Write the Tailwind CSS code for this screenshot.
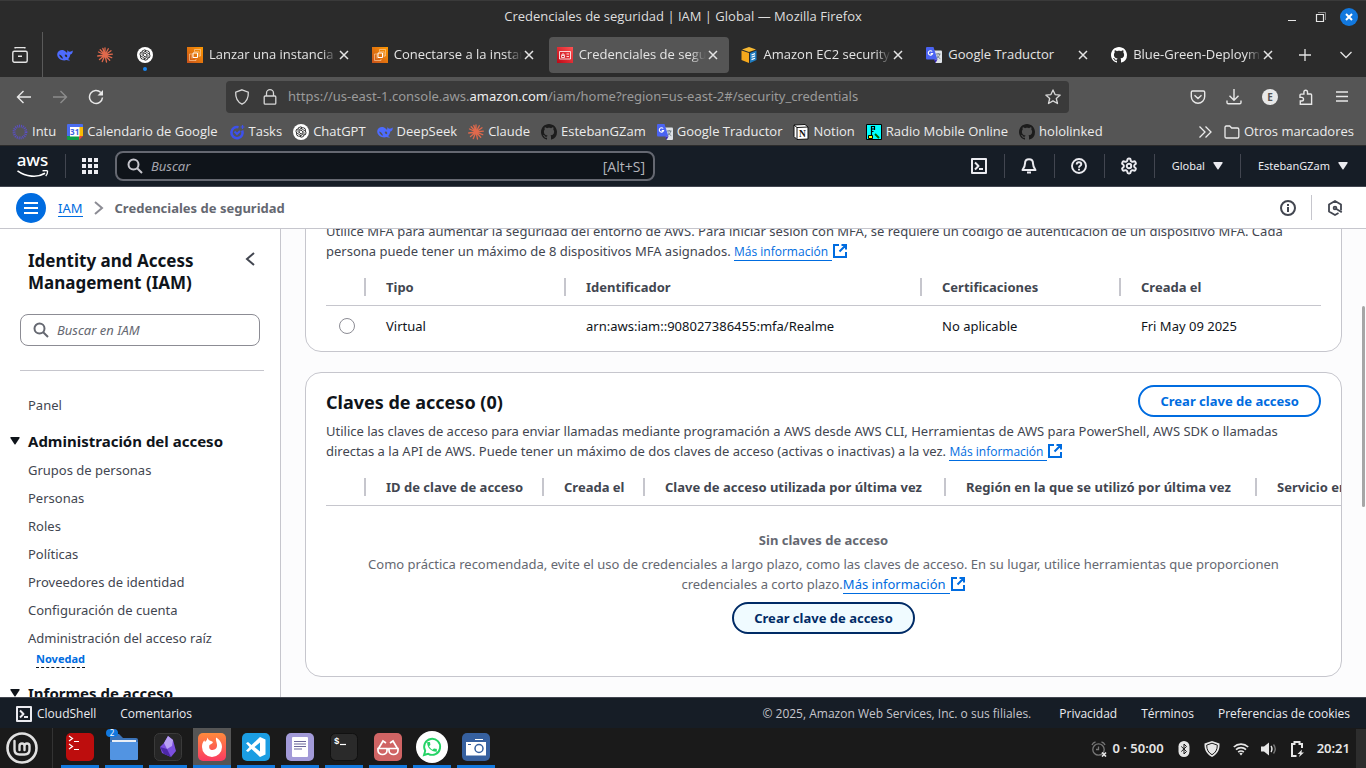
<!DOCTYPE html>
<html lang="es">
<head>
<meta charset="utf-8">
<meta name="viewport" content="width=device-width, initial-scale=1">
<title>Credenciales de seguridad | IAM | Global</title>
<script src="https://cdn.jsdelivr.net/npm/@tailwindcss/browser@4"></script>
</head>
<body class="flex h-screen flex-col overflow-hidden bg-[#2b2b2b] font-['Noto_Sans','Open_Sans',sans-serif] text-[13px]">

<!-- Shared icons -->
<svg class="absolute size-0" aria-hidden="true">
  <symbol id="x" viewBox="0 0 10 10"><path d="M1 1l8 8M9 1l-8 8" stroke="currentColor" stroke-width="1.500"/></symbol>
  <symbol id="github" viewBox="0 0 16 16"><path fill="currentColor" d="M8 0C3.58 0 0 3.58 0 8c0 3.54 2.29 6.53 5.47 7.59.4.07.55-.17.55-.38 0-.19-.01-.82-.01-1.49-2.01.37-2.53-.49-2.69-.94-.09-.23-.48-.94-.82-1.13-.28-.15-.68-.52-.01-.53.63-.01 1.08.58 1.23.82.72 1.21 1.87.87 2.33.66.07-.52.28-.87.51-1.07-1.78-.2-3.64-.89-3.64-3.95 0-.87.31-1.59.82-2.15-.08-.2-.36-1.02.08-2.12 0 0 .67-.21 2.2.82.64-.18 1.32-.27 2-.27s1.36.09 2 .27c1.53-1.04 2.2-.82 2.2-.82.44 1.1.16 1.92.08 2.12.51.56.82 1.27.82 2.15 0 3.07-1.87 3.75-3.65 3.95.29.25.54.73.54 1.48 0 1.07-.01 1.93-.01 2.2 0 .21.15.46.55.38A8.01 8.01 0 0016 8c0-4.42-3.58-8-8-8z"/></symbol>
  <symbol id="gpt" viewBox="0 0 32 32"><circle cx="16" cy="16" r="16" fill="#fff"/><path transform="translate(5.2 5.2) scale(.9)" fill="#000" d="M22.2819 9.8211a5.9847 5.9847 0 0 0-.5157-4.9108 6.0462 6.0462 0 0 0-6.5098-2.9A6.0651 6.0651 0 0 0 4.9807 4.1818a5.9847 5.9847 0 0 0-3.9977 2.9 6.0462 6.0462 0 0 0 .7427 7.0966 5.98 5.98 0 0 0 .511 4.9107 6.051 6.051 0 0 0 6.5146 2.9001A5.9847 5.9847 0 0 0 13.2599 24a6.0557 6.0557 0 0 0 5.7718-4.2058 5.9894 5.9894 0 0 0 3.9977-2.9001 6.0557 6.0557 0 0 0-.7475-7.0729zm-9.022 12.6081a4.4755 4.4755 0 0 1-2.8764-1.0408l.1419-.0804 4.7783-2.7582a.7948.7948 0 0 0 .3927-.6813v-6.7369l2.02 1.1686a.071.071 0 0 1 .038.052v5.5826a4.504 4.504 0 0 1-4.4945 4.4944zm-9.6607-4.1254a4.4708 4.4708 0 0 1-.5346-3.0137l.142.0852 4.783 2.7582a.7712.7712 0 0 0 .7806 0l5.8428-3.3685v2.3324a.0804.0804 0 0 1-.0332.0615L9.74 19.9502a4.4992 4.4992 0 0 1-6.1408-1.6464zM2.3408 7.8956a4.485 4.485 0 0 1 2.3655-1.9728V11.6a.7664.7664 0 0 0 .3879.6765l5.8144 3.3543-2.0201 1.1685a.0757.0757 0 0 1-.071 0l-4.8303-2.7865A4.504 4.504 0 0 1 2.3408 7.872zm16.5963 3.8558L13.1038 8.364 15.1192 7.2a.0757.0757 0 0 1 .071 0l4.8303 2.7913a4.4944 4.4944 0 0 1-.6765 8.1042v-5.6772a.79.79 0 0 0-.407-.667zm2.0107-3.0231l-.142-.0852-4.7735-2.7818a.7759.7759 0 0 0-.7854 0L9.409 9.2297V6.8974a.0662.0662 0 0 1 .0284-.0615l4.8303-2.7866a4.4992 4.4992 0 0 1 6.6802 4.66zM8.3065 12.863l-2.02-1.1638a.0804.0804 0 0 1-.038-.0567V6.0742a4.4992 4.4992 0 0 1 7.3757-3.4537l-.142.0805L8.704 5.459a.7948.7948 0 0 0-.3927.6813zm1.0976-2.3654l2.602-1.4998 2.6069 1.4998v2.9994l-2.5974 1.4997-2.6067-1.4997Z"/></symbol>
  <symbol id="whale" viewBox="0 0 16 16"><path fill="#4d6bfe" d="M.2 7C.7 3.6 4 2.400 6.600 3.200 8 3.700 8.800 4.600 9.600 5.600 10.600 5.900 10.200 4.600 10.300 3.300c.6.2 1 .7 1.300 1.300 1.200.4 2.500-.1 4.100-1.100.2 1.800-.4 3.500-2.400 4.100-.3 2-1.200 3.600-2.200 4.600.7.500 1.600.8 2 1-1.200.6-2.700.4-3.700-.1C5.500 14.300 0 12 .2 7zm7.500 1.100c.2 1 .9 2.100 2 2.200.9-.5.6-2-.2-2.600-.6-.4-1.500-.3-1.800.4zM2.100 7.500c.4 2 2 3.900 4 4.300-.6-2-1.800-4-4-4.300z"/></symbol>
  <symbol id="spark" viewBox="0 0 16 16"><path stroke="#e0694c" stroke-width="1.300" stroke-linecap="round" d="M8 8V.8M8 8l3.300-6.200M8 8l6-4.200M8 8l7.300-.8M8 8l6.700 2.700M8 8l4.700 5.300M8 8l1.500 7M8 8l-2.700 6.600M8 8l-5.500 4.500M8 8l-7.300 1M8 8L1.500 5M8 8L3.200 2.700M8 8L5.800 1.300"/></symbol>
  <symbol id="ec2" viewBox="0 0 16 16"><defs><linearGradient id="og" x1="0" y1="1" x2="1" y2="0"><stop stop-color="#c8511b"/><stop offset="1" stop-color="#f90"/></linearGradient></defs><path fill="url(#og)" d="M0 0h16v16H0z"/><path fill="none" stroke="#fff" stroke-width="1" d="M6 6h4.500v4.500H6z"/><path fill="none" stroke="#ffd9ae" stroke-width=".6" d="M7.500 4.500V2.500h6V9h-1.500M4.500 7H2.500v6.500H9V12M5 11.500V6.500M7 4.800h5v5"/></symbol>
  <symbol id="iamfav" viewBox="0 0 16 16"><defs><linearGradient id="rg" x1="0" y1="1" x2="1" y2="0"><stop stop-color="#bd0816"/><stop offset="1" stop-color="#ff5252"/></linearGradient></defs><path fill="url(#rg)" d="M0 0h16v16H0z"/><path fill="none" stroke="#fff" stroke-width=".8" d="M2.500 4.500h11v7.500h-11zM4.500 8.500h3v2h-3zM5 8.500V7h2v1.500M9.500 7h2.500M9.500 9.500h2.500"/></symbol>
  <symbol id="gtr" viewBox="0 0 16 16"><path fill="#dfe3e8" d="M6 3.500h9q1 0 1 1V15q0 1-1 1H9.500z"/><path fill="#4a63f2" d="M1 0h6.500l4 12.500H1q-1 0-1-1V1q0-1 1-1z"/><path fill="#3b2bb5" d="M8 12.500h3.500L9.500 16z"/><path fill="none" stroke="#fff" stroke-width="1.100" d="M6.200 4.500A2.200 2.200 0 1 0 6.600 6.600H4.700"/><path fill="none" stroke="#6d7c86" d="M10 7h4.500M12.200 6v1M13.700 7c-.4 2.200-1.400 3.300-3 4.300M11.300 8.500c.5 1.500 1.500 2.300 3 3.200"/></symbol>
  <symbol id="search" viewBox="0 0 16 16"><path fill="none" stroke="currentColor" stroke-width="2" d="M6.500 1.500a5 5 0 1 0 0 10 5 5 0 0 0 0-10zM10.200 10.200l4.800 4.800"/></symbol>
  <symbol id="shell" viewBox="0 0 16 16"><path fill="none" stroke="currentColor" stroke-width="2" stroke-linejoin="round" d="M1 1h14v14H1zM4 4.500L7.500 8 4 11.500M8 11h4"/></symbol>
  <symbol id="ext" viewBox="0 0 16 16"><path fill="none" stroke="currentColor" stroke-width="2" d="M7 2H2v12h12V9M9.500 2H14v4.500M14 2L7.500 8.500"/></symbol>
</svg>

<!-- Window title -->
<header class="relative flex h-8 shrink-0 items-center justify-center border-t border-[#3a3a3a] text-[#dedede]">
  <h1 class="font-['Open_Sans',sans-serif] text-[13px]">Credenciales de seguridad | IAM | Global — Mozilla Firefox</h1>
  <div class="absolute right-2 flex items-center gap-3.5 text-[#e6e6e6]">
    <button aria-label="Minimizar" class="flex h-3 w-3 items-end pb-px"><svg class="h-2 w-2" viewBox="0 0 8 8"><path d="M0 6.500h8" stroke="currentColor"/></svg></button>
    <button aria-label="Restaurar"><svg class="size-3" viewBox="0 0 12 12" fill="none" stroke="currentColor"><path d="M2.500 3.500h7v7h-7z" stroke-width="1.200"/><path d="M4 1.500h7.500V9" opacity=".5"/></svg></button>
    <button aria-label="Cerrar" class="grid size-[18px] place-items-center rounded-full bg-[#1278de] text-white"><svg class="size-2" viewBox="0 0 8 8"><path d="M1 1l6 6M7 1L1 7" stroke="currentColor" stroke-width="2"/></svg></button>
  </div>
</header>

<!-- Tab strip -->
<nav aria-label="Pestañas" class="flex h-[45px] shrink-0 items-center font-['Open_Sans',sans-serif] text-[#e4e4e4]">
  <button aria-label="Firefox View" class="grid h-full w-[43px] place-items-center border-r border-[#5a5a5a] pr-0.5"><svg class="size-4" viewBox="0 0 16 16" fill="none" stroke="currentColor" stroke-width="1.400"><rect x=".8" y="4.200" width="14.400" height="11" rx="1.500"/><path d="M2.500 1.200c.5-.5 1-.6 1.500-.6h8c.5 0 1 .1 1.500.6M6 9.200h4"/></svg></button>
  <div class="flex w-[135px] shrink-0 pl-0.5">
    <button aria-label="DeepSeek" class="grid h-9 w-10 place-items-center"><svg class="size-4"><use href="#whale"/></svg></button>
    <button aria-label="Claude" class="grid h-9 w-10 place-items-center"><svg class="size-4"><use href="#spark"/></svg></button>
    <button aria-label="ChatGPT" class="relative grid h-9 w-10 place-items-center"><svg class="size-4"><use href="#gpt"/></svg><span class="absolute bottom-0.5 size-1 rounded-full bg-[#1b86f0]"></span></button>
  </div>
  <div class="grid min-w-0 flex-1 grid-cols-6 gap-1 pl-px">
    <a href="#" class="flex h-9 min-w-0 items-center gap-1.5 rounded px-2"><svg class="size-4 shrink-0"><use href="#ec2"/></svg><span class="-mr-1 flex-1 overflow-hidden whitespace-nowrap [mask-image:linear-gradient(to_right,black_88%,transparent)]">Lanzar una instancia | EC2</span><svg class="mr-[3px] size-2.5 shrink-0"><use href="#x"/></svg></a>
    <a href="#" class="flex h-9 min-w-0 items-center gap-1.5 rounded px-2"><svg class="size-4 shrink-0"><use href="#ec2"/></svg><span class="-mr-1 flex-1 overflow-hidden whitespace-nowrap [mask-image:linear-gradient(to_right,black_88%,transparent)]">Conectarse a la instancia</span><svg class="mr-[3px] size-2.5 shrink-0"><use href="#x"/></svg></a>
    <a href="#" aria-current="page" class="flex h-9 min-w-0 items-center gap-1.5 rounded bg-[#555] px-2"><svg class="size-4 shrink-0"><use href="#iamfav"/></svg><span class="-mr-1 flex-1 overflow-hidden whitespace-nowrap [mask-image:linear-gradient(to_right,black_88%,transparent)]">Credenciales de seguridad</span><svg class="mr-[3px] size-2.5 shrink-0"><use href="#x"/></svg></a>
    <a href="#" class="flex h-9 min-w-0 items-center gap-1.5 rounded px-2"><svg class="size-4 shrink-0" viewBox="0 0 16 16"><path fill="#f6b832" d="M8 0l7 2.500L8 5 1 2.500z"/><path fill="#f6a81c" d="M.5 3.500L8 6v10L.5 13z"/><path fill="#1f7cc0" d="M9 6l6.500-2.500V13L9 16z"/><path d="M10.500 8l3.500-1.400M10.500 10.300L14 8.900M10.500 12.600l3.500-1.400" stroke="#fff" stroke-width="1.200"/></svg><span class="-mr-1 flex-1 overflow-hidden whitespace-nowrap [mask-image:linear-gradient(to_right,black_88%,transparent)]">Amazon EC2 security groups</span><svg class="mr-[3px] size-2.5 shrink-0"><use href="#x"/></svg></a>
    <a href="#" class="flex h-9 min-w-0 items-center gap-1.5 rounded px-2"><svg class="size-4 shrink-0"><use href="#gtr"/></svg><span class="-mr-1 flex-1 overflow-hidden whitespace-nowrap">Google Traductor</span><svg class="mr-[3px] size-2.5 shrink-0"><use href="#x"/></svg></a>
    <a href="#" class="flex h-9 min-w-0 items-center gap-1.5 rounded px-2"><svg class="size-4 shrink-0 text-white"><use href="#github"/></svg><span class="-mr-1 flex-1 overflow-hidden whitespace-nowrap [mask-image:linear-gradient(to_right,black_88%,transparent)]">Blue-Green-Deployment</span><svg class="mr-[3px] size-2.5 shrink-0"><use href="#x"/></svg></a>
  </div>
  <div class="flex w-[82px] shrink-0">
    <button aria-label="Nueva pestaña" class="grid w-[42px] place-items-center"><svg class="size-3" viewBox="0 0 12 12"><path d="M6 0v12M0 6h12" stroke="currentColor" stroke-width="1.300"/></svg></button>
    <button aria-label="Listar pestañas" class="grid w-10 place-items-center"><svg class="h-2 w-3" viewBox="0 0 12 8" fill="none"><path d="M.5 1L6 6.500 11.500 1" stroke="currentColor" stroke-width="1.300"/></svg></button>
  </div>
</nav>

<!-- Navigation toolbar -->
<div class="flex h-10 shrink-0 items-center bg-[#555] text-[#e8e8e8]">
  <div class="flex w-[226px] shrink-0 gap-5 pl-4">
    <button aria-label="Atrás"><svg class="size-4" viewBox="0 0 16 16" fill="none" stroke="currentColor" stroke-width="1.400"><path d="M15 8H1.500M7.500 2L1.500 8l6 6"/></svg></button>
    <button aria-label="Adelante" class="text-[#8c8c8c]"><svg class="size-4" viewBox="0 0 16 16" fill="none" stroke="currentColor" stroke-width="1.400"><path d="M1 8h13.500M8.500 2l6 6-6 6"/></svg></button>
    <button aria-label="Recargar"><svg class="size-4" viewBox="0 0 16 16" fill="none" stroke="currentColor" stroke-width="1.500"><path d="M14.500 8.500A6.500 6.500 0 1 1 12.800 3.600"/><path d="M15 1v5.500H9.500z" fill="currentColor" stroke="none"/></svg></button>
  </div>
  <div class="flex h-8 flex-1 items-center rounded bg-[#3a3a3a] px-2 text-[#d8d8d8]">
    <svg class="size-4" viewBox="0 0 16 16" fill="none" stroke="currentColor" stroke-width="1.300"><path d="M8 .8l6.300 2.300c.3 5.500-1.300 9.600-6.300 12.100C3 12.700 1.400 8.600 1.700 3.100z"/></svg>
    <svg class="ml-3 size-4" viewBox="0 0 16 16" fill="none" stroke="currentColor" stroke-width="1.300"><rect x="2.200" y="7" width="11.600" height="8.200" rx="1"/><path d="M4.500 7V4.200a3.500 3.500 0 0 1 7 0V7"/></svg>
    <span class="ml-2.5 flex-1 whitespace-nowrap text-[13px] text-[#9b9b9b]">https://us-east-1.console.aws.<span class="text-[#efefef]">amazon.com</span>/iam/home?region=us-east-2#/security_credentials</span>
    <svg class="size-4" viewBox="0 0 16 16" fill="none" stroke="currentColor" stroke-width="1.300" stroke-linejoin="round"><path d="M8 .9l2.100 4.700 5.100.5-3.900 3.400 1.200 5L8 11.900l-4.500 2.600 1.200-5L.8 6.100l5.100-.5z"/></svg>
  </div>
  <div class="flex w-[297px] shrink-0 items-center justify-end gap-5 pr-4">
    <button aria-label="Pocket"><svg class="size-4" viewBox="0 0 16 16" fill="none" stroke="currentColor" stroke-width="1.400"><path d="M1.300 3.200q0-1.200 1.200-1.200h11q1.200 0 1.200 1.200V7.500A6.700 6.700 0 0 1 1.300 7.500zM4.500 6.200L8 9.500l3.500-3.300"/></svg></button>
    <button aria-label="Descargas"><svg class="size-4" viewBox="0 0 16 16" fill="none" stroke="currentColor" stroke-width="1.400"><path d="M8 0v11M3.500 6.800L8 11.300l4.500-4.500M1 11.500v2q0 1.300 1.300 1.300h11.400q1.300 0 1.300-1.300v-2"/></svg></button>
    <button aria-label="Cuenta" class="grid size-4 place-items-center rounded-full bg-[#e8e8e8] text-[10px] leading-none font-bold text-[#555]">E</button>
    <button aria-label="Extensiones"><svg class="size-4" viewBox="0 0 16 16" fill="none" stroke="currentColor" stroke-width="1.400"><path d="M2.300 15.200V12h1.400a1.700 1.700 0 0 0 0-3.600H2V6q0-.9.900-.9h3V3a1.800 1.800 0 0 1 3.600 0v2h3.200q.9 0 .9.900v9.300z"/></svg></button>
    <button aria-label="Menú"><svg class="size-4" viewBox="0 0 16 16"><path d="M2 3h12M2 7.500h12M2 12h12" stroke="currentColor" stroke-width="1.300"/></svg></button>
  </div>
</div>

<!-- Bookmarks -->
<nav aria-label="Marcadores" class="flex h-7 shrink-0 items-center gap-[11px] bg-[#555] px-3 pt-px font-['Open_Sans',sans-serif] whitespace-nowrap text-[#ececec] [&_a]:flex [&_a]:items-center [&_a]:gap-1 [&_svg]:size-4">
  <a href="#"><svg viewBox="0 0 16 16"><circle cx="8" cy="8" r="6" fill="none" stroke="#5a4fc4" stroke-width="2.800" stroke-dasharray="1 .9"/></svg>Intu</a>
  <a href="#"><svg viewBox="0 0 16 16"><path fill="#4a6cf0" d="M1 0h14q1 0 1 1v2H0V1q0-1 1-1z"/><path fill="#4a6cf0" d="M0 3h4v9H0z"/><path fill="#0f9d48" d="M0 12h12v4H1q-1 0-1-1z"/><path fill="#fbbc04" d="M12 3h4v9h-4z"/><path fill="#ea4335" d="M12 12h4l-4 4z"/><path fill="#fff" d="M3 3h9.500v9.500H3z"/><text x="7.700" y="10.800" font-size="8" font-weight="700" text-anchor="middle" fill="#3b62e0">31</text></svg>Calendario de Google</a>
  <a href="#"><svg viewBox="0 0 16 16" fill="none" stroke="#3d51ea"><path stroke-width="2.600" d="M13.200 6.500A5.600 5.600 0 1 1 9.500 3.200"/><path stroke-width="2" d="M5.500 7.500l2.500 2.500 3-3"/><path stroke-width="1.200" d="M13.500 1v4M11.500 3h4"/></svg>Tasks</a>
  <a href="#"><svg><use href="#gpt"/></svg>ChatGPT</a>
  <a href="#"><svg><use href="#whale"/></svg>DeepSeek</a>
  <a href="#"><svg><use href="#spark"/></svg>Claude</a>
  <a href="#"><svg class="text-[#1c1c1c]"><use href="#github"/></svg>EstebanGZam</a>
  <a href="#"><svg><use href="#gtr"/></svg>Google Traductor</a>
  <a href="#"><svg viewBox="0 0 16 16"><path fill="#fff" stroke="#111" d="M1 1l11-.5 3 2.500v12L4 15.500 1 12.500z"/><path fill="none" stroke="#111" d="M1 1l3 2.500L15 3M4 3.500v12"/><text x="9.500" y="13" font-size="9.500" font-weight="700" text-anchor="middle" fill="#111" font-family="Liberation Serif">N</text></svg>Notion</a>
  <a href="#"><svg viewBox="0 0 16 16"><path fill="#0ff" stroke="#000" d="M.5.500h15v15H.5z"/><path fill="none" stroke="#000" stroke-width="1.200" d="M5.500 2v9M8.500 2v4M5.500 2.500h3M5.500 5h3M5.500 7.500h2"/><path fill="#ff0" stroke="#000" d="M2.500 11.500h4v3h-4z"/><path stroke="#060" stroke-width="2" d="M9 10l4 4"/></svg>Radio Mobile Online</a>
  <a href="#"><svg class="text-[#1c1c1c]"><use href="#github"/></svg>hololinked</a>
  <button aria-label="Más marcadores" class="ml-auto"><svg viewBox="0 0 16 16" fill="none" stroke="currentColor" stroke-width="1.300"><path d="M2.500 2.500L8 8l-5.500 5.500M8.500 2.500L14 8l-5.500 5.500"/></svg></button>
  <a href="#"><svg viewBox="0 0 16 16" fill="none" stroke="currentColor" stroke-width="1.300"><path d="M1 3.500Q1 2 2.300 2h3.400l2 2h5.800q1.300 0 1.300 1.300v7.400q0 1.300-1.300 1.300H2.300Q1 14 1 12.700z"/></svg>Otros marcadores</a>
</nav>

<!-- AWS console header -->
<header class="flex h-[42px] shrink-0 items-center border-y border-t-[#2b2b2b] border-b-[#424650] bg-[#161d26] text-[11px] text-[#ebebf0]">
  <a href="#" aria-label="AWS" class="flex w-[65px] flex-col items-center"><span class="text-[17px] leading-3 font-medium text-white">aws</span><svg class="mt-1 h-2 w-8" viewBox="0 0 32 8" fill="none" stroke="#fff" stroke-width="1.600"><path d="M.5.800C9 6.800 20 8.200 28 3.300"/><path d="M25.500.8c2-.4 3.800-.5 5 .2.200 1.700-.5 3.700-1.800 5" stroke-width="1.300"/></svg></a>
  <button aria-label="Servicios" class="flex h-6 items-center border-l border-[#424650] pl-4"><svg class="size-4" viewBox="0 0 16 16" fill="currentColor"><path d="M0 0h4v4H0zM6 0h4v4H6zM12 0h4v4h-4zM0 6h4v4H0zM6 6h4v4H6zM12 6h4v4h-4zM0 12h4v4H0zM6 12h4v4H6zM12 12h4v4h-4z"/></svg></button>
  <label class="ml-[17px] flex h-[30px] w-[540px] items-center rounded-lg border-2 border-[#656871] bg-[#0f141a] pr-2 pl-2.5 text-[13px] text-[#c6c6cd]">
    <svg class="size-4 shrink-0"><use href="#search"/></svg>
    <input type="search" aria-label="Buscar" placeholder="Buscar" class="ml-2 min-w-0 flex-1 bg-transparent pt-px outline-none placeholder:text-[#a4a4ad] placeholder:italic">
    <span class="font-['Open_Sans',sans-serif] text-[14px] text-[#b4b4bb]">[Alt+S]</span>
  </label>
  <div class="ml-auto flex items-center [&>button]:h-6 [&>button]:border-l [&>button]:border-[#424650]">
    <button aria-label="CloudShell" class="grid w-[50px] place-items-center border-l-0!"><svg class="size-4"><use href="#shell"/></svg></button>
    <button aria-label="Notificaciones" class="grid w-[50px] place-items-center"><svg class="size-4" viewBox="0 0 16 16" fill="none" stroke="currentColor" stroke-width="2"><path stroke-linejoin="round" d="M8 1.200c2.500 0 4 1.800 4 4.300 0 3 1 4.500 2.500 6.500h-13C3 10 4 8.500 4 5.500c0-2.500 1.500-4.300 4-4.300z"/><path d="M6 14.500h4"/></svg></button>
    <button aria-label="Ayuda" class="grid w-[50px] place-items-center"><svg class="size-4" viewBox="0 0 16 16" fill="none" stroke="currentColor" stroke-width="1.900"><circle cx="8" cy="8" r="7"/><path d="M5.700 6.500C5.700 5 6.700 4.300 8 4.300s2.300.8 2.300 2C10.300 7.800 8 7.900 8 9.700M8 10.700v1.700"/></svg></button>
    <button aria-label="Configuración" class="grid w-[50px] place-items-center"><svg class="size-[18px]" viewBox="0 0 24 24" fill="none" stroke="currentColor" stroke-width="2.600"><path d="M12.220 2h-.44a2 2 0 0 0-2 2v.18a2 2 0 0 1-1 1.730l-.43.25a2 2 0 0 1-2 0l-.15-.08a2 2 0 0 0-2.730.73l-.22.38a2 2 0 0 0 .73 2.730l.15.1a2 2 0 0 1 1 1.720v.51a2 2 0 0 1-1 1.740l-.15.09a2 2 0 0 0-.73 2.730l.22.38a2 2 0 0 0 2.730.73l.15-.08a2 2 0 0 1 2 0l.43.25a2 2 0 0 1 1 1.730V20a2 2 0 0 0 2 2h.44a2 2 0 0 0 2-2v-.18a2 2 0 0 1 1-1.730l.43-.25a2 2 0 0 1 2 0l.15.08a2 2 0 0 0 2.730-.73l.22-.39a2 2 0 0 0-.73-2.730l-.15-.08a2 2 0 0 1-1-1.740v-.5a2 2 0 0 1 1-1.740l.15-.09a2 2 0 0 0 .73-2.730l-.22-.38a2 2 0 0 0-2.730-.73l-.15.08a2 2 0 0 1-2 0l-.43-.25a2 2 0 0 1-1-1.730V4a2 2 0 0 0-2-2z"/><circle cx="12" cy="12" r="3"/></svg></button>
    <button class="flex items-center gap-2 px-[17px]">Global<svg class="h-2 w-2.5" viewBox="0 0 10 8" fill="currentColor"><path d="M1 0h8q1 0 .6 1L5.700 7q-.7 1-1.400 0L.4 1Q0 0 1 0z"/></svg></button>
    <button class="flex items-center gap-2 pr-[18px] pl-[17px]">EstebanGZam<svg class="h-2 w-2.5" viewBox="0 0 10 8" fill="currentColor"><path d="M1 0h8q1 0 .6 1L5.700 7q-.7 1-1.400 0L.4 1Q0 0 1 0z"/></svg></button>
  </div>
</header>

<!-- Breadcrumb bar -->
<div class="flex h-[42px] shrink-0 items-center border-b border-[#c6c6cd] bg-white pr-[23px] pl-4 text-[#424650]">
  <button aria-label="Abrir navegación" class="grid size-[30px] place-items-center rounded-full bg-[#006ce0] text-white"><svg class="h-3 w-3.5" viewBox="0 0 14 12"><path d="M0 1h14M0 6h14M0 11h14" stroke="currentColor" stroke-width="2"/></svg></button>
  <nav aria-label="Ruta" class="ml-3 flex items-center gap-[11px] pt-px">
    <a href="#" class="border-b border-[#006ce0] leading-4 text-[#006ce0]">IAM</a>
    <svg class="h-3.5 w-2.5" viewBox="0 0 10 14" fill="none" stroke="#8c8c94" stroke-width="2"><path d="M1 1l7 6-7 6"/></svg>
    <span class="pt-px font-bold text-[#656871]">Credenciales de seguridad</span>
  </nav>
  <button aria-label="Información" class="ml-auto"><svg class="size-4" viewBox="0 0 16 16" fill="none" stroke="currentColor" stroke-width="2"><circle cx="8" cy="8" r="7"/><path d="M8 7v5M8 4v2"/></svg></button>
  <button aria-label="Diagnóstico" class="ml-[15px] flex h-[25px] items-center border-l border-[#c6c6cd] pl-[15px]"><svg class="size-4" viewBox="0 0 16 16" fill="none" stroke="currentColor" stroke-width="1.800"><path stroke-linejoin="round" d="M14 10.500V4.500L8 1 2 4.500v7L8 15l3.500-2"/><circle cx="8" cy="8" r="1.400"/><path d="M8.500 8.500l6.300 3.700"/></svg></button>
</div>

<div class="relative flex min-h-0 flex-1">
  <!-- Side navigation -->
  <aside class="w-[281px] shrink-0 overflow-hidden border-r border-[#c6c6cd] bg-white text-[#424650]">
    <div class="flex items-start justify-between pt-[21px] pr-[25px] pl-7">
      <h2 class="w-44 text-[17px] leading-[22px] font-bold text-[#0f141a]">Identity and Access Management (IAM)</h2>
      <button aria-label="Cerrar navegación" class="mt-0.5"><svg class="h-3.5 w-2.5" viewBox="0 0 10 14" fill="none" stroke="currentColor" stroke-width="2"><path d="M9 1L2 7l7 6"/></svg></button>
    </div>
    <label class="mx-5 mt-5 flex h-8 items-center rounded-lg border border-[#8c8c94] px-3 text-[#656871]">
      <svg class="size-4 shrink-0"><use href="#search"/></svg>
      <input type="search" aria-label="Buscar en IAM" placeholder="Buscar en IAM" class="ml-2 min-w-0 flex-1 bg-transparent pt-px outline-none placeholder:text-[#656871] placeholder:italic">
    </label>
    <hr class="mt-6 mr-4 ml-5 border-[#c6c6cd]">
    <nav aria-label="IAM" class="mt-6 leading-5">
      <a href="#" class="ml-7 block">Panel</a>
      <button aria-expanded="true" class="mt-4 flex items-center gap-2 pl-2.5 text-[15px] leading-5 font-bold text-[#0f141a]"><svg class="h-2 w-2.5" viewBox="0 0 10 8" fill="currentColor"><path d="M1 0h8q1 0 .6 1L5.700 7q-.7 1-1.400 0L.4 1Q0 0 1 0z"/></svg>Administración del acceso</button>
      <ul class="mt-[9px] flex flex-col gap-2 pl-7">
        <li><a href="#">Grupos de personas</a></li>
        <li><a href="#">Personas</a></li>
        <li><a href="#">Roles</a></li>
        <li><a href="#">Políticas</a></li>
        <li><a href="#">Proveedores de identidad</a></li>
        <li><a href="#">Configuración de cuenta</a></li>
        <li><a href="#">Administración del acceso raíz</a><br><button class="ml-2 border-b border-dashed border-[#0f141a] text-[11px] leading-4 font-bold text-[#006ce0]">Novedad</button></li>
      </ul>
      <button aria-expanded="true" class="mt-[15px] flex items-center gap-2 pl-2.5 text-[15px] leading-5 font-bold text-[#0f141a]"><svg class="h-2 w-2.5" viewBox="0 0 10 8" fill="currentColor"><path d="M1 0h8q1 0 .6 1L5.700 7q-.7 1-1.400 0L.4 1Q0 0 1 0z"/></svg>Informes de acceso</button>
    </nav>
  </aside>

  <!-- Content, scrolled part of the way down -->
  <main class="min-w-0 flex-1 overflow-hidden bg-[#fcfcfd] px-6 text-[#424650]">
    <section class="-mt-7 rounded-2xl border border-[#c6c6cd] bg-white px-5 pt-[19px] pb-1">
      <p class="leading-5">Utilice MFA para aumentar la seguridad del entorno de AWS. Para iniciar sesión con MFA, se requiere un código de autenticación de un dispositivo MFA. Cada persona puede tener un máximo de 8 dispositivos MFA asignados. <a href="#" class="font-['Open_Sans',sans-serif] text-xs text-[#006ce0]"><span class="border-b border-[#006ce0] pr-1">Más información</span><svg class="inline size-4 align-[-3px]"><use href="#ext"/></svg></a></p>
      <table class="mt-2 w-full table-fixed border-collapse text-left">
        <colgroup><col class="w-10"><col class="w-[200px]"><col class="w-[356px]"><col class="w-[199px]"><col></colgroup>
        <thead><tr class="h-9 border-b border-[#c6c6cd]">
          <th class="p-0 pt-px"><div class="ml-auto h-[18px] w-0.5 bg-[#c6c6cd]"></div></th>
          <th class="p-0 pt-px pl-5"><div class="flex items-center justify-between">Tipo<span class="h-[18px] w-0.5 bg-[#c6c6cd]"></span></div></th>
          <th class="p-0 pt-px pl-5"><div class="flex items-center justify-between">Identificador<span class="h-[18px] w-0.5 bg-[#c6c6cd]"></span></div></th>
          <th class="p-0 pt-px pl-5"><div class="flex items-center justify-between">Certificaciones<span class="h-[18px] w-0.5 bg-[#c6c6cd]"></span></div></th>
          <th class="p-0 pt-px pl-5">Creada el</th>
        </tr></thead>
        <tbody><tr class="h-[42px] text-[#0f141a]">
          <td class="p-0 pl-[13px]"><input type="radio" name="mfa" aria-label="Seleccionar dispositivo Virtual" class="block size-4 appearance-none rounded-full border border-[#8c8c94] bg-white"></td>
          <td class="p-0 pl-5">Virtual</td>
          <td class="p-0 pl-5">arn:aws:iam::908027386455:mfa/Realme</td>
          <td class="p-0 pl-5">No aplicable</td>
          <td class="p-0 pl-5">Fri May 09 2025</td>
        </tr></tbody>
      </table>
    </section>

    <section class="mt-5 overflow-hidden rounded-2xl border border-[#c6c6cd] bg-white px-5 pt-3 pb-[42px]">
      <div class="flex items-center justify-between">
        <h2 class="pt-px text-[18px] leading-6 font-bold text-[#0f141a]">Claves de acceso (0)</h2>
        <button class="h-8 rounded-full border-2 border-[#006ce0] px-5 pt-px font-bold text-[#006ce0]">Crear clave de acceso</button>
      </div>
      <p class="mt-1 leading-5">Utilice las claves de acceso para enviar llamadas mediante programación a AWS desde AWS CLI, Herramientas de AWS para PowerShell, AWS SDK o llamadas directas a la API de AWS. Puede tener un máximo de dos claves de acceso (activas o inactivas) a la vez. <a href="#" class="font-['Open_Sans',sans-serif] text-xs text-[#006ce0]"><span class="border-b border-[#006ce0] pr-1">Más información</span><svg class="inline size-4 align-[-3px]"><use href="#ext"/></svg></a></p>
      <div class="mt-2 -mr-5 overflow-hidden">
        <table class="w-[1180px] table-fixed border-collapse text-left whitespace-nowrap">
          <colgroup><col class="w-10"><col class="w-[178px]"><col class="w-[101px]"><col class="w-[301px]"><col class="w-[311px]"><col></colgroup>
          <thead><tr class="h-9 border-b border-[#c6c6cd]">
            <th class="p-0 pt-px"><div class="ml-auto h-[18px] w-0.5 bg-[#c6c6cd]"></div></th>
            <th class="p-0 pt-px pl-5"><div class="flex items-center justify-between">ID de clave de acceso<span class="h-[18px] w-0.5 bg-[#c6c6cd]"></span></div></th>
            <th class="p-0 pt-px pl-5"><div class="flex items-center justify-between">Creada el<span class="h-[18px] w-0.5 bg-[#c6c6cd]"></span></div></th>
            <th class="p-0 pt-px pl-5"><div class="flex items-center justify-between">Clave de acceso utilizada por última vez<span class="h-[18px] w-0.5 bg-[#c6c6cd]"></span></div></th>
            <th class="p-0 pt-px pl-5"><div class="flex items-center justify-between">Región en la que se utilizó por última vez<span class="h-[18px] w-0.5 bg-[#c6c6cd]"></span></div></th>
            <th class="p-0 pt-px pl-5">Servicio en el que se utilizó</th>
          </tr></thead>
        </table>
      </div>
      <div class="mt-6 px-4 text-center leading-5 text-[#656871]">
        <p class="font-bold">Sin claves de acceso</p>
        <p class="mt-1">Como práctica recomendada, evite el uso de credenciales a largo plazo, como las claves de acceso. En su lugar, utilice herramientas que proporcionen credenciales a corto plazo.<a href="#" class="text-[#006ce0]"><span class="border-b border-[#006ce0] pr-1">Más información</span><svg class="inline size-4 align-[-3px]"><use href="#ext"/></svg></a></p>
        <button class="mt-2 h-8 rounded-full border-2 border-[#002b66] bg-[#f0fbff] px-5 font-bold text-[#002b66]">Crear clave de acceso</button>
      </div>
    </section>
  </main>
  <div class="absolute top-[77px] right-px h-[201px] w-[3px] rounded-full bg-[#a6a6a6]"></div>
</div>

<!-- AWS footer -->
<footer class="flex h-[31px] shrink-0 items-center border-t border-[#424650] bg-[#161d26] px-4 pt-px font-['Open_Sans',sans-serif] text-xs text-[#ebebf0]">
  <button class="flex items-center gap-[5px]"><svg class="size-4"><use href="#shell"/></svg>CloudShell</button>
  <a href="#" class="ml-6">Comentarios</a>
  <span class="ml-auto text-[#c6c6cd]">© 2025, Amazon Web Services, Inc. o sus filiales.</span>
  <a href="#" class="ml-7">Privacidad</a>
  <a href="#" class="ml-6">Términos</a>
  <a href="#" class="ml-6">Preferencias de cookies</a>
</footer>

<!-- Desktop panel -->
<footer class="flex h-10 shrink-0 items-center bg-[#1a1a1a] text-[#e6e6e6]">
  <button aria-label="Menú de aplicaciones" class="flex h-full w-[53px] items-center border-r border-[#333] pl-[5px]"><svg class="size-[34px]" viewBox="0 0 34 34" fill="none" stroke="#e0e0e0"><circle cx="17" cy="17" r="14.500" stroke-width="2.600"/><path stroke-width="2.400" stroke-linecap="round" stroke-linejoin="round" d="M9.500 10v8.500q0 5 5 5h5q5 0 5-5v-3.500q0-2.500-2.500-2.500t-2.500 2.500v4M19.500 15q0-2.500-2.500-2.500t-2.500 2.500v4"/></svg></button>
  <div class="ml-2 flex h-full gap-1.5 [&>button]:grid [&>button]:h-full [&>button]:w-[38px] [&>button]:place-items-center [&>button]:border-b-[3px] [&>button]:border-[#1278de] [&>button]:pt-px">
    <button aria-label="Terminator"><svg class="size-7" viewBox="0 0 28 28"><rect width="28" height="28" rx="5" fill="#bd0d0d"/><path fill="none" stroke="#fff" stroke-width="1.200" d="M3 3l3.500 2.500L3 8M8 8.500h5M3 11l3.500 2.500L3 16M8 16.500h5"/></svg></button>
    <button aria-label="Archivos" class="relative"><svg class="size-7" viewBox="0 0 28 28"><path fill="#3b73b8" d="M0 3q0-2 2-2h7l4 4h13q2 0 2 2v8H0z"/><path fill="#e9eef5" d="M2 7h24v4H2z"/><path fill="#5294e2" d="M0 9h28v17q0 1-1 1H1q-1 0-1-1z"/></svg><span class="absolute top-px left-px grid h-2 w-3 place-items-center rounded-full bg-[#1278de] text-[8px] leading-none text-white">2</span></button>
    <button aria-label="Obsidian"><svg class="size-7" viewBox="0 0 28 28"><rect x=".5" y=".5" width="27" height="27" rx="5" fill="#262626" stroke="#3a3a3a"/><path fill="#7c4fe0" d="M14 3l5 4 3 11-5 6-9-4-2-6 4-4z"/><path fill="#b9a0f5" d="M14 3l-4 7 3 6 5-3 1-6z"/><path fill="#4d28a8" d="M6 14l4 7 7 3-4-8z"/></svg></button>
    <button aria-label="Firefox" class="bg-[#555]"><svg class="size-7" viewBox="0 0 28 28"><defs><linearGradient id="ff" x1="0" y1="0" x2="0" y2="1"><stop stop-color="#ff8a3c"/><stop offset="1" stop-color="#fb3a62"/></linearGradient></defs><rect width="28" height="28" rx="5" fill="url(#ff)"/><path fill="#fff" d="M18 4.500c3.600 2 6 5.500 6 9.500a10 10 0 0 1-20 0c0-3 .8-5 2.300-6.800L7 9l1.800-2 .7-2.500c.5 2 1.500 3 3.500 3.500 2 .5 2.500 1.500 1 2.500l-2.500 1.500c-1 3 .5 5 3 5 3 0 4.800-2.200 4.500-5.200-.2-2.500-1.500-4.300-1-7.300z"/></svg></button>
    <button aria-label="Visual Studio Code"><svg class="size-7" viewBox="0 0 28 28"><rect width="28" height="28" rx="5" fill="#1b9de2"/><path fill="#fff" fill-rule="evenodd" d="M18 4l5.500 2.500v15L18 24l-8.500-8-3.500 3-2-1.300L7.500 14 4 10.300 6 9l3.500 3zM18 9.500L12.500 14l5.500 4.500z"/></svg></button>
    <button aria-label="Documento"><svg class="size-7" viewBox="0 0 28 28"><rect width="28" height="28" rx="5" fill="#a29ad8"/><rect x="6" y="4" width="16" height="20" rx="1" fill="#fff"/><path stroke="#6b6699" stroke-width="1.100" d="M8 8.500h12M8 11h12M8 13.500h12M8 16h8"/></svg></button>
    <button aria-label="Terminal"><svg class="size-7" viewBox="0 0 28 28"><rect x=".5" y=".5" width="27" height="27" rx="5" fill="#2a2a2a" stroke="#111"/><text x="4" y="11" font-size="9" font-weight="700" fill="#fff" font-family="Liberation Mono">$</text><path d="M10 11.500h6" stroke="#fff" stroke-width="1.200"/></svg></button>
    <button aria-label="Lectura"><svg class="size-7" viewBox="0 0 28 28"><rect width="28" height="28" rx="5" fill="#d06464"/><path fill="none" stroke="#fff" stroke-width="1.700" d="M4 15.500h9v2a4.500 4 0 0 1-9 0zM15 15.500h9v2a4.500 4 0 0 1-9 0zM12.500 16h3M4.500 15.500L9 8l3 2M23.500 15.500L19 8l-3 2"/></svg></button>
    <button aria-label="WhatsApp"><svg class="size-8" viewBox="0 0 32 32"><circle cx="16" cy="16" r="16" fill="#fff"/><path fill="none" stroke="#25d366" stroke-width="1.900" d="M8 24l1.200-4.200a8 8 0 1 1 3 3z"/><path transform="translate(9.500 9.400) scale(.54)" fill="#25d366" d="M6.600 10.800c1.400 2.800 3.800 5.100 6.600 6.600l2.200-2.200c.3-.3.7-.4 1-.2 1.100.4 2.300.6 3.600.6.6 0 1 .4 1 1V20c0 .6-.4 1-1 1C10.600 21 3 13.400 3 4c0-.6.4-1 1-1h3.500c.6 0 1 .4 1 1 0 1.300.2 2.500.6 3.600.1.3 0 .7-.2 1z"/></svg></button>
    <button aria-label="Captura"><svg class="size-7" viewBox="0 0 28 28"><rect width="28" height="28" rx="5" fill="#36609f"/><path fill="#fff" d="M4 9h20v13.500H4zM13 6h8v1h-8z"/><circle cx="17" cy="15.500" r="4" fill="none" stroke="#36609f" stroke-width="1.500"/><path d="M6 11.500h3" stroke="#36609f"/></svg></button>
  </div>
  <div class="ml-auto flex h-full items-center gap-3 pt-px font-semibold">
    <span class="flex items-center gap-1.5"><svg class="size-4" viewBox="0 0 16 16" fill="none" stroke="#777" stroke-width="1.300"><circle cx="7.500" cy="8.500" r="5.700"/><path d="M1 4q1-2.500 3.500-3M14 4q-1-2.500-3.500-3M7.500 5.500v3H5"/><path stroke="#e6e6e6" stroke-width="1.700" d="M11 11.500l4 4M15 11.500l-4 4"/></svg>0 · 50:00</span>
    <svg class="size-4" viewBox="0 0 16 16"><rect x="2.500" width="11" height="16" rx="5.500" fill="#e6e6e6"/><path fill="none" stroke="#1a1a1a" d="M5.300 5.500l5.200 5L8 13V3l2.500 2.500-5.200 5"/></svg>
    <svg class="size-4" viewBox="0 0 16 16"><path fill="#e6e6e6" d="M8 0l7.500 2.500C16 9 13 13.500 8 16 3 13.500 0 9 .5 2.500z"/><path fill="none" stroke="#1a1a1a" d="M8 2.200l5.300 1.900C13.400 8.700 11.500 11.800 8 13.700 4.500 11.800 2.600 8.700 2.700 4.100z"/></svg>
    <svg class="ml-px size-4" viewBox="0 0 16 16" fill="none" stroke="#e6e6e6" stroke-width="1.700"><path d="M.8 6a10.500 10.500 0 0 1 14.400 0M3 8.700a7.300 7.300 0 0 1 10 0M5.200 11.200a4 4 0 0 1 5.600 0"/><path fill="#e6e6e6" stroke="none" d="M8 14.500l-1.700-2q1.700-1.500 3.400 0z"/></svg>
    <svg class="size-4" viewBox="0 0 16 16" fill="none" stroke="#e6e6e6" stroke-width="1.400"><path fill="#e6e6e6" stroke="none" d="M0 5.500h3L8 1.500v13l-5-4H0z"/><path d="M10 5q2 3 0 6"/><path stroke="#777" d="M12.500 3.500q3.500 4.500 0 9"/></svg>
    <svg class="size-4" viewBox="0 0 16 16" fill="none" stroke="#e6e6e6" stroke-width="2"><path d="M7.500 15H3V3h2.500V1h5v2H13v4"/><path fill="#e6e6e6" stroke="none" d="M13 8.500L8.500 13H11l-1 3 5-4.500h-2.500z"/></svg>
    <time class="pr-1.5">20:21</time>
    <span class="-ml-3 h-full w-2.5 bg-[#2d2d2d]"></span>
  </div>
</footer>
</body>
</html>
